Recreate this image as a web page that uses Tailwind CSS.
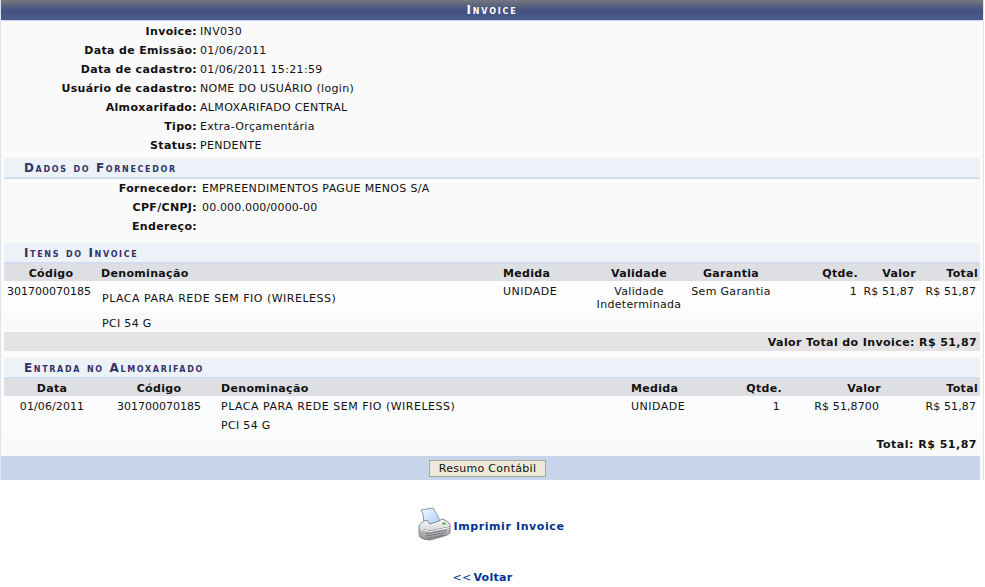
<!DOCTYPE html>
<html>

<head>
    <meta charset="UTF-8">
    <title>Invoice</title>
    <script src="https://cdn.jsdelivr.net/npm/@tailwindcss/browser@4"></script>
</head>

<body class="bg-white h-[587px] overflow-hidden font-['DejaVu_Sans',sans-serif] text-[11px] leading-[13px] text-[#111] tracking-[0.33px]">
    <div class="w-[984px] border-x border-[#dfe3ec] bg-[#fafafa]">
        <div class="h-[21px] bg-gradient-to-b from-[#77787f] via-[#44527f] to-[#4a5a8c] border-b border-[#c8d4ea] text-center text-white font-bold text-[12px] [font-variant:small-caps] tracking-[1.8px] leading-[20px]">Invoice</div>

        <div class="pt-[1px] h-[137px]">
            <div class="grid grid-cols-[196px_1fr] gap-x-[3px] auto-rows-[19px] items-center">
                <div class="text-right font-bold">Invoice:</div><div>INV030</div>
                <div class="text-right font-bold">Data de Emissão:</div><div>01/06/2011</div>
                <div class="text-right font-bold">Data de cadastro:</div><div>01/06/2011 15:21:59</div>
                <div class="text-right font-bold">Usuário de cadastro:</div><div>NOME DO USUÁRIO (login)</div>
                <div class="text-right font-bold">Almoxarifado:</div><div>ALMOXARIFADO CENTRAL</div>
                <div class="text-right font-bold">Tipo:</div><div>Extra-Orçamentária</div>
                <div class="text-right font-bold">Status:</div><div>PENDENTE</div>
            </div>
        </div>

        <div class="ml-[3px] w-[976px] h-[21px] pl-[20px] bg-[#edf1f8] border-b-2 border-[#d3ddef] font-bold text-[12px] text-[#333366] [font-variant:small-caps] tracking-[1.65px] leading-[20px]">Dados do Fornecedor</div>
        <div class="h-[64px] grid grid-cols-[196px_1fr] gap-x-[5px] auto-rows-[19px] items-center">
            <div class="text-right font-bold">Fornecedor:</div><div>EMPREENDIMENTOS PAGUE MENOS S/A</div>
            <div class="text-right font-bold">CPF/CNPJ:</div><div class="tracking-[0.15px]">00.000.000/0000-00</div>
            <div class="text-right font-bold">Endereço:</div><div></div>
        </div>

        <div class="ml-[3px] w-[976px] h-[21px] pl-[20px] bg-[#edf1f8] border-b-2 border-[#d3ddef] font-bold text-[12px] text-[#333366] [font-variant:small-caps] tracking-[1.65px] leading-[20px]">Itens do Invoice</div>
        <table class="ml-[3px] w-[976px] table-fixed border-collapse">
            <colgroup><col class="w-[94px]"><col class="w-[401px]"><col class="w-[97px]"><col class="w-[86px]"><col class="w-[98px]"><col class="w-[80px]"><col class="w-[58px]"><col class="w-[62px]"></colgroup>
            <tr class="h-[17px] bg-[#dedfe3] font-bold [&>th]:pt-[1px]">
                <th class="text-center">Código</th><th class="text-left pl-[3px]">Denominação</th><th class="text-left pl-[4px]">Medida</th><th class="text-center">Validade</th><th class="text-center">Garantia</th><th class="text-right pr-[2px]">Qtde.</th><th class="text-right pr-[2px]">Valor</th><th class="text-right pr-[2px]">Total</th>
            </tr>
            <tr class="h-[32px] bg-[#fdfdfe] align-top">
                <td class="pt-[4px] pl-[3px] whitespace-nowrap tracking-normal">301700070185</td>
                <td class="pt-[11px] pl-[4px] tracking-[0.5px]">PLACA PARA REDE SEM FIO (WIRELESS)</td>
                <td class="pt-[4px] pl-[4px] tracking-[0.5px]">UNIDADE</td>
                <td class="pt-[4px] text-center">Validade Indeterminada</td>
                <td class="pt-[4px] text-center">Sem Garantia</td>
                <td class="pt-[4px] text-right pr-[3px]">1</td>
                <td class="pt-[4px] text-right pr-[4px] whitespace-nowrap tracking-[0.1px]">R$ 51,87</td>
                <td class="pt-[4px] text-right pr-[4px] whitespace-nowrap tracking-[0.1px]">R$ 51,87</td>
            </tr>
            <tr class="h-[19px] bg-[#fafafa]"><td></td><td class="pl-[4px] pt-[1px]">PCI 54 G</td><td colspan="6"></td></tr>
            <tr class="h-[19px] bg-[#e5e3e3]"><td colspan="8" class="text-right font-bold pr-[3px] pt-[1px] tracking-[0.4px]">Valor Total do Invoice: R$ 51,87</td></tr>
        </table>

        <div class="mt-[7px] ml-[3px] w-[976px] h-[21px] pl-[20px] bg-[#edf1f8] border-b-2 border-[#d3ddef] font-bold text-[12px] text-[#333366] [font-variant:small-caps] tracking-[1.65px] leading-[20px]">Entrada no Almoxarifado</div>
        <table class="ml-[3px] w-[976px] table-fixed border-collapse">
            <colgroup><col class="w-[96px]"><col class="w-[118px]"><col class="w-[409px]"><col class="w-[63px]"><col class="w-[94px]"><col class="w-[99px]"><col class="w-[97px]"></colgroup>
            <tr class="h-[17px] bg-[#dedfe3] font-bold [&>th]:pt-[1px]">
                <th class="text-center">Data</th><th class="text-center">Código</th><th class="text-left pl-[3px]">Denominação</th><th class="text-left pl-[4px]">Medida</th><th class="text-right pr-[2px]">Qtde.</th><th class="text-right pr-[2px]">Valor</th><th class="text-right pr-[2px]">Total</th>
            </tr>
            <tr class="h-[21px] bg-[#fbfcfe]">
                <td class="text-center tracking-[0.1px]">01/06/2011</td><td class="text-center tracking-normal">301700070185</td><td class="pl-[3px] tracking-[0.5px]">PLACA PARA REDE SEM FIO (WIRELESS)</td><td class="pl-[4px] tracking-[0.5px]">UNIDADE</td><td class="text-right pr-[4px]">1</td><td class="text-right pr-[4px] tracking-[0.1px]">R$ 51,8700</td><td class="text-right pr-[4px] tracking-[0.1px]">R$ 51,87</td>
            </tr>
            <tr class="h-[17px] bg-[#fbfcfe]"><td></td><td></td><td class="pl-[3px]">PCI 54 G</td><td colspan="4"></td></tr>
            <tr class="h-[20px]"><td colspan="7" class="text-right font-bold pr-[3px] tracking-[0.5px]">Total: R$ 51,87</td></tr>
        </table>

        <div class="mt-[2px] w-[979px] h-[24px] bg-[#c8d4ea] flex items-center justify-center pr-[6px]">
            <button class="w-[117px] h-[17px] bg-[#ece9d8] border border-[#a5a5a5] text-[#111] text-[11px] tracking-[0.3px] leading-[15px]">Resumo Contábil</button>
        </div>
    </div>

    <div class="mt-[27px] flex items-start justify-center gap-[1px] pr-[2px] text-[#003390] font-bold tracking-[0.6px]">
        <svg width="34" height="34" viewBox="0 0 34 34">
            <defs>
                <linearGradient id="paper" x1="0" y1="0" x2="1" y2="1"><stop offset="0" stop-color="#f4f9ff"/><stop offset="1" stop-color="#a9cdf7"/></linearGradient>
                <linearGradient id="top" x1="0" y1="0" x2="0" y2="1"><stop offset="0" stop-color="#f7f7f7"/><stop offset="1" stop-color="#d6d7d9"/></linearGradient>
                <linearGradient id="front" x1="0" y1="0" x2="0" y2="1"><stop offset="0" stop-color="#c9cacc"/><stop offset="1" stop-color="#8f9194"/></linearGradient>
            </defs>
            <path d="M5 18 Q7 9 3 3 L15 1 Q19 7 22 14 L12 18 Z" fill="url(#paper)" stroke="#8b98a8"/>
            <path d="M1 19 Q2 16 6 14 L9 13 L12 17 L21 14 L24 12 Q29 13 32 17 L32 20 L12 24 L1 22 Z" fill="url(#top)" stroke="#85878a"/>
            <path d="M1 22 L12 24 L32 20 L32 26 Q30 28 26 29 L12 33 Q5 33 2 30 Q1 28 1 26 Z" fill="url(#front)" stroke="#7d7f82"/>
            <path d="M1.5 22 L12 24.5 L31.5 20.5" fill="none" stroke="#fbfbfb"/>
            <path d="M8 26.5 L29 23 M8 29 L28 25.5 M10 31.5 L26 28" stroke="#77797c" stroke-width="1.2"/>
            <ellipse cx="26" cy="16.5" rx="2.2" ry="1.3" fill="#62c24a"/>
        </svg>
        <a href="#" class="mt-[13px]">Imprimir Invoice</a>
    </div>
    <div class="mt-[30px] text-center text-[#003390] pr-[20px] whitespace-nowrap"><a href="#">&lt;&lt; <b class="-ml-[2px] tracking-[0.3px]">Voltar</b></a></div>
</body>

</html>
